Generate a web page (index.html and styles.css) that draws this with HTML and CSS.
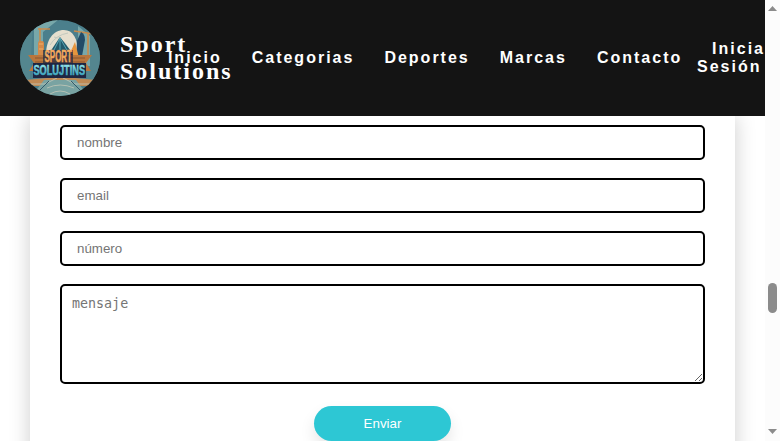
FILE: index.html
```html
<!DOCTYPE html>
<html lang="es">
<head>
<meta charset="utf-8">
<title>Sport Solutions</title>
<link rel="stylesheet" href="styles.css">
</head>
<body>
<div class="page">
  <header class="header">
    <svg class="logo" viewBox="0 0 80 76" role="img" aria-label="Sport Solutions">
      <defs>
        <clipPath id="disc"><ellipse cx="40" cy="38" rx="40" ry="38"/></clipPath>
        <linearGradient id="ice" x2="0" y2="1"><stop offset=".2" stop-color="#8fe0e6"/><stop offset="1" stop-color="#2796b5"/></linearGradient>
      </defs>
      <g clip-path="url(#disc)">
        <rect width="80" height="76" fill="#4b7f8c"/>
        <path d="M0 0h13l-4 76H0zM64 0h16v76H68z" fill="#54868f"/>
        <path d="M14 8l10-8h14L23 12v34H14zM58 6l12 10v30H58z" fill="#78a8aa"/>
        <path d="M26 35c0-15 7-25 18-25 9 0 14 8 14 25z" fill="#e5dfce"/>
        <path d="M30 25q6-10 18-12M34 17q10 1 14 12" stroke="#c1c8be" fill="none"/>
        <path d="M28 35l12-18 14 18z" fill="#23596b"/>
        <path d="M40 18v16M40 18l-7 14M40 18l8 14" stroke="#5fb0bd" stroke-width=".9"/>
        <path d="M18 9h12M54 11l20 3M20 8v14M68 13v23" stroke="#c88b4c" stroke-width="1.6"/>
        <rect x="18" y="21" width="6" height="16" rx="2" fill="#d48a49"/>
        <path d="M19 24h4M19 29h4" stroke="#f0b06b"/>
        <path d="M61 12q4 2 4 8l-3 16h-6l1-15z" fill="#234b67"/>
        <path d="M50 33l5-11 4 16z" fill="#e5953e"/>
        <path d="M8 35h64l-6 8 5 8H9l5-8z" fill="#b9763d"/>
        <path d="M15 38h50M15 42h50" stroke="#8a552f" stroke-width="1"/>
        <path d="M5 60l22-2h28l21 2-9 6H14z" fill="#bf8a55"/>
        <path d="M24 60h32l12 16H12z" fill="#79a3a2"/>
        <path d="M7 64h18l12-6M73 64H55l-12-6M27 68q13-6 27 0M30 74q10-6 20 0" stroke="#c4c8b8" stroke-width=".8" fill="none"/>
        <path d="M20 70l9-9M60 70l-9-9" stroke="#33596b"/>
        <path d="M23 30h30v14H23z" fill="#202642" opacity=".7"/>
        <path d="M13 43h53v15H13z" fill="#202642"/>
        <text class="logo-top" x="24.5" y="42" textLength="27.5" lengthAdjust="spacingAndGlyphs">SPORT</text>
        <text class="logo-bottom" x="13.5" y="54.8" textLength="51.5" lengthAdjust="spacingAndGlyphs">SOLUJTINS</text>
      </g>
    </svg>
    <h1 class="brand">Sport Solutions</h1>
    <nav class="nav">
      <a>Inicio</a><a>Categorias</a><a>Deportes</a><a>Marcas</a><a>Contacto</a>
    </nav>
    <a class="login"><span>Inicia</span><span class="second">Sesión</span></a>
  </header>
  <main class="main">
    <form class="card">
      <input class="field" type="text" placeholder="nombre">
      <input class="field" type="text" placeholder="email">
      <input class="field" type="text" placeholder="número">
      <textarea class="field message" placeholder="mensaje"></textarea>
      <button class="send" type="button">Enviar</button>
    </form>
  </main>
</div>
<div class="scrollbar">
  <svg width="9" height="5" viewBox="0 0 9 5"><path d="M0 5L4.5 0 9 5z" fill="#8b8b8b"/></svg>
  <div class="thumb"></div>
  <svg class="down" width="9" height="5" viewBox="0 0 9 5"><path d="M0 0h9L4.5 5z" fill="#8b8b8b"/></svg>
</div>
</body>
</html>
```
FILE: styles.css
```css
* { box-sizing: border-box; }
body {
  margin: 0;
  display: grid;
  grid-template-columns: 765px 15px;
  height: 441px;
  overflow: hidden;
  background: #fff;
  font-family: "Liberation Sans", sans-serif;
}
.page { height: 441px; overflow: hidden; display: flex; flex-direction: column; }
.header {
  position: relative;
  z-index: 1;
  flex: none;
  height: 116px;
  padding-left: 20px;
  display: flex;
  align-items: center;
  background: #141414;
  color: #fff;
}
.logo { flex: none; width: 80px; height: 76px; }
.logo-top, .logo-bottom {
  font-family: "Liberation Sans", sans-serif;
  font-weight: bold;
}
.logo-top { font-size: 16px; fill: #f3a95c; stroke: #f3a95c; stroke-width: .5px; }
.logo-bottom { font-size: 14.5px; fill: url(#ice); stroke: url(#ice); stroke-width: .5px; }
.brand {
  flex: none;
  width: 112px;
  margin: 0 -64.1px 0 20px;
  font: bold 24px/27px "Liberation Serif", serif;
  letter-spacing: 2px;
}
.nav {
  flex: none;
  display: flex;
  gap: 30px;
  font-size: 16px;
  font-weight: bold;
  letter-spacing: 2px;
  line-height: 18px;
}
.login {
  margin-left: auto;
  flex: none;
  font-size: 16px;
  font-weight: bold;
  line-height: 18px;
  letter-spacing: 2px;
  display: flex;
  flex-direction: column;
  align-items: flex-end;
}
.second { margin-right: 3.5px; }
.main { padding: 0 30px; }
.card {
  height: 400px;
  padding: 9px 30px 0;
  display: flex;
  flex-direction: column;
  align-items: center;
  background: #fff;
  box-shadow: 0 0 20px rgba(0, 0, 0, .2);
}
.field {
  display: block;
  flex: none;
  width: 100%;
  height: 35px;
  margin: 0 0 18px;
  padding: 0 15px;
  border: 2px solid #000;
  border-radius: 5px;
  background: #fff;
  font: 13.333px "Liberation Sans", sans-serif;
}
.message {
  height: 100px;
  margin-bottom: 22px;
  padding: 10px;
  font-family: "DejaVu Sans Mono", monospace;
}
.send {
  flex: none;
  width: 137px;
  height: 35px;
  padding: 0;
  border: 0;
  border-radius: 18px;
  background: #2dc7d4;
  color: #fff;
  font: 13.333px "Liberation Sans", sans-serif;
  box-shadow: 0 8px 15px rgba(0, 0, 0, .1);
}
.scrollbar {
  height: 441px;
  padding: 6px 0 7px;
  background: #fcfcfc;
  display: flex;
  flex-direction: column;
  align-items: center;
}
.thumb { flex: none; width: 9px; height: 30px; margin-top: 272px; border-radius: 5px; background: #8b8b8b; }
.down { margin-top: auto; }
```
